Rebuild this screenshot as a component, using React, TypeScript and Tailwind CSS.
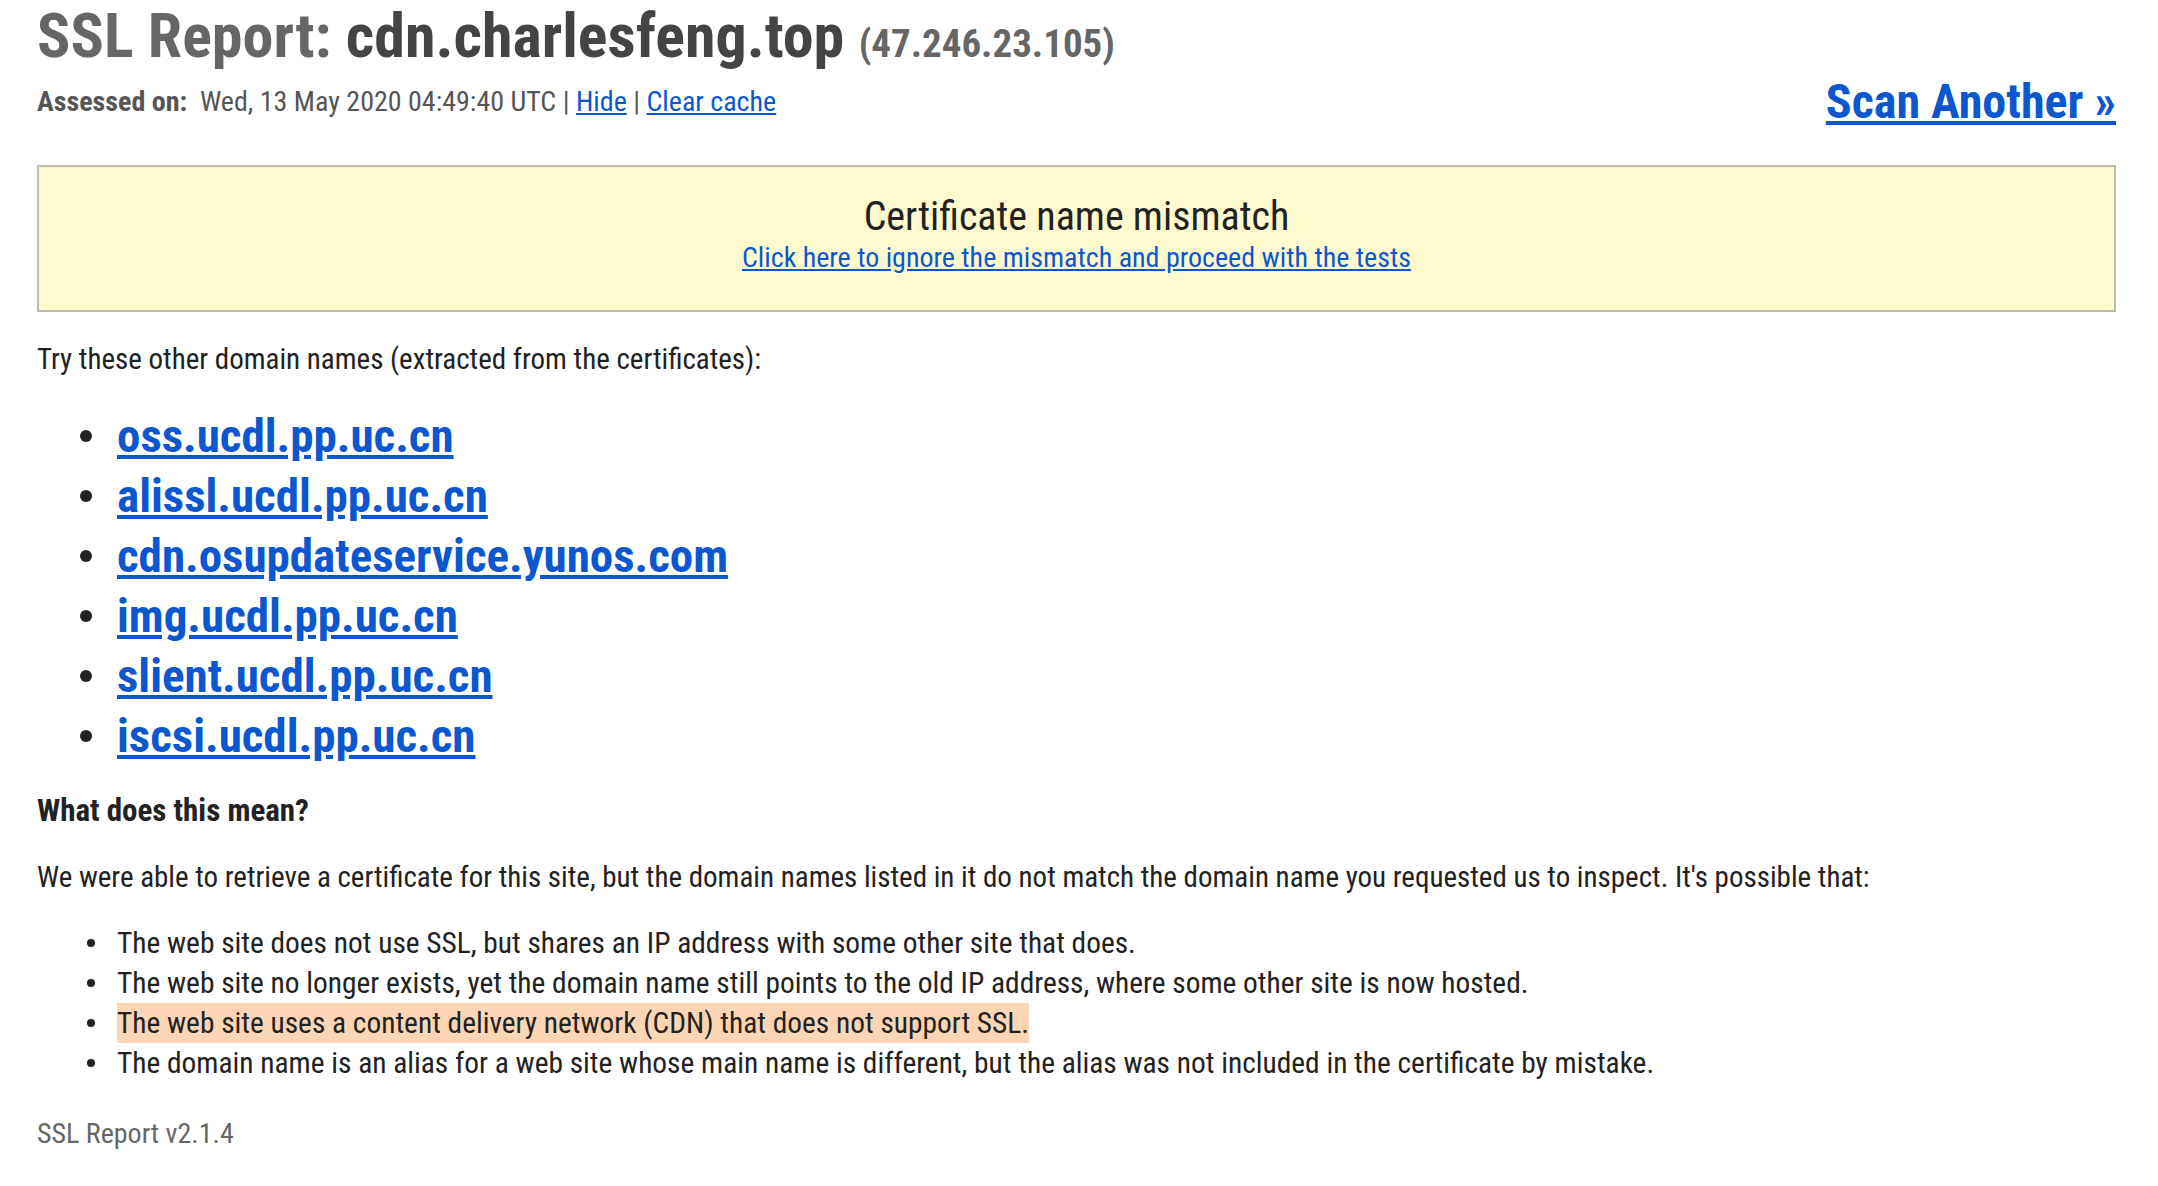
import React from "react";

const domains = [
  "oss.ucdl.pp.uc.cn",
  "alissl.ucdl.pp.uc.cn",
  "cdn.osupdateservice.yunos.com",
  "img.ucdl.pp.uc.cn",
  "slient.ucdl.pp.uc.cn",
  "iscsi.ucdl.pp.uc.cn",
];

const reasons = [
  { text: "The web site does not use SSL, but shares an IP address with some other site that does.", hl: false },
  { text: "The web site no longer exists, yet the domain name still points to the old IP address, where some other site is now hosted.", hl: false },
  { text: "The web site uses a content delivery network (CDN) that does not support SSL.", hl: true },
  { text: "The domain name is an alias for a web site whose main name is different, but the alias was not included in the certificate by mistake.", hl: false },
];

export default function App() {
  return (
    <div className="min-h-[1186px] w-full bg-white pl-[37px] pr-[42px] font-['Roboto_Condensed','Roboto',sans-serif] text-[#222]">
      <h1 className="whitespace-nowrap pt-[3px] text-[62px] font-bold leading-[66px] text-[#666]">
        SSL Report: <span className="text-[#444]">cdn.charlesfeng.top</span>{" "}
        <span className="text-[39px] text-[#666]">(47.246.23.105)</span>
      </h1>

      <div className="flex h-[50px] items-center justify-between">
        <div className="whitespace-nowrap text-[28px] leading-[40px] text-[#555]">
          <span className="font-bold">Assessed on:</span>
          {"\u00a0 "}Wed, 13 May 2020 04:49:40 UTC |{" "}
          <a href="#" className="text-[#0b57d0] underline">Hide</a> |{" "}
          <a href="#" className="text-[#0b57d0] underline">Clear cache</a>
        </div>
        <a href="#" className="whitespace-nowrap text-[48px] font-bold leading-[50px] text-[#0b57d0] underline">
          Scan Another »
        </a>
      </div>

      <div className="mt-[38px] border-2 border-[#bdbba9] bg-[#fffacd] pb-[35px] pt-[26px] text-center">
        <div className="text-[40px] leading-[48px] text-[#222]">Certificate name mismatch</div>
        <a href="#" className="text-[28px] leading-[34px] text-[#0b57d0] underline">
          Click here to ignore the mismatch and proceed with the tests
        </a>
      </div>

      <p className="mt-[27px] text-[29px] leading-[40px]">
        Try these other domain names (extracted from the certificates):
      </p>

      <ul className="mt-[27px]">
        {domains.map((d) => (
          <li key={d} className="flex h-[60px] items-center">
            <span className="ml-[43px] mr-[25px] h-[12px] w-[12px] rounded-full bg-[#222]" />
            <a href="#" className="text-[47px] font-bold leading-[60px] text-[#0b57d0] underline">
              {d}
            </a>
          </li>
        ))}
      </ul>

      <p className="mt-[25px] text-[31px] font-bold leading-[40px]">What does this mean?</p>

      <p className="mt-[26px] whitespace-nowrap text-[29px] leading-[40px]">
        We were able to retrieve a certificate for this site, but the domain names listed in it do not match the domain name you requested us to inspect. It's possible that:
      </p>

      <ul className="mt-[26px]">
        {reasons.map((r) => (
          <li key={r.text} className="flex h-[40px] items-center">
            <span className="ml-[50px] mr-[22px] h-[8px] w-[8px] shrink-0 rounded-full bg-[#222]" />
            <span className={"whitespace-nowrap text-[29.4px] leading-[34px] " + (r.hl ? "bg-[#fcd6b4] py-[3px]" : "")}>
              {r.text}
            </span>
          </li>
        ))}
      </ul>

      <p className="mt-[31px] text-[28px] leading-[40px] text-[#666]">SSL Report v2.1.4</p>
    </div>
  );
}
